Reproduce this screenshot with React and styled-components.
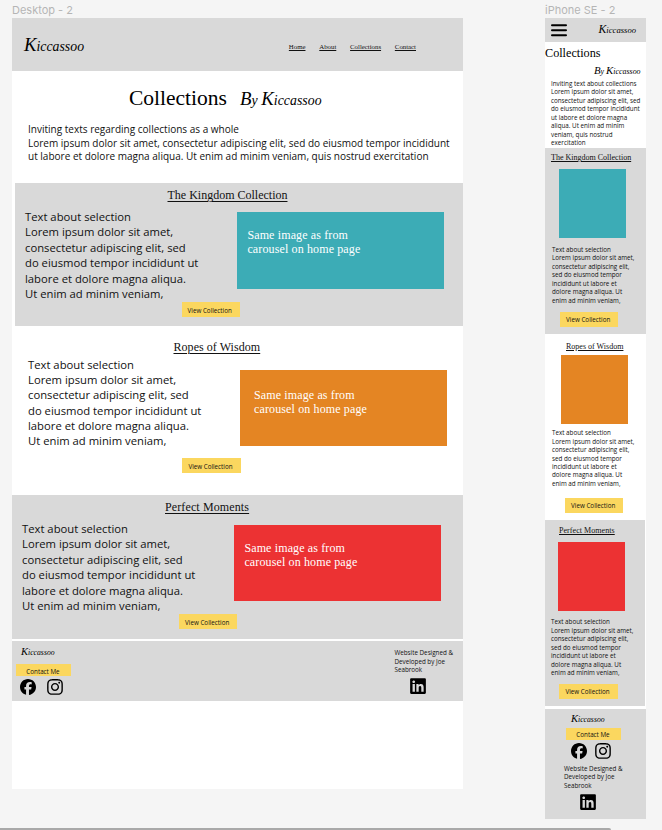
import React from "react";
import styled, { createGlobalStyle } from "styled-components";
import { FaFacebook, FaInstagram, FaLinkedin } from "react-icons/fa6";

const GlobalStyle = createGlobalStyle`
  *, *::before, *::after { box-sizing: border-box; }
  body { margin: 0; background: #f5f5f5; overflow: hidden; }
  p, h1, h2 { margin: 0; font-weight: 400; }
`;

const Canvas = styled.div`
  height: 830px;
  display: flex;
  flex-direction: column;
  background: #f5f5f5;
  color: #111;
  font-family: "Open Sans", sans-serif;
  white-space: nowrap;
`;

const Frames = styled.main`
  height: 828px;
  display: flex;
  align-items: flex-start;
  gap: 82px;
  padding-left: 12px;
`;

const Frame = styled.div`
  width: ${(p) => p.$width}px;
`;

const FrameLabel = styled.div`
  height: 18px;
  padding-top: 2px;
  font: 11px/16px Inter, sans-serif;
  color: #b5b5b5;
`;

const Artboard = styled.div`
  height: ${(p) => p.$height}px;
  display: flex;
  flex-direction: column;
  background: #fff;
`;

const Header = styled.header`
  height: 53px;
  flex: none;
  display: flex;
  justify-content: space-between;
  padding: 15px 47px 0 12px;
  background: #d9d9d9;
`;

const PhoneHeader = styled(Header)`
  height: 24px;
  padding: 5px 10px 0 6px;
`;

const Script = styled.span`
  display: block;
  height: ${(p) => p.$size * 1.25}px;
  font: italic ${(p) => p.$size * 0.69}px/${(p) => p.$size * 1.25}px "Liberation Serif", serif;
  letter-spacing: ${(p) => p.$spacing || 0}px;
  margin: ${(p) => p.$margin || 0};
  color: #000;
`;

const Swash = styled.span`
  font-size: 1.36em;
  line-height: 0;
`;

const Nav = styled.nav`
  display: flex;
  padding-top: 9px;
  gap: 13.8px;
`;

const NavLink = styled.a`
  font: 6.8px/9px "Liberation Serif", serif;
  text-decoration: underline;
  text-underline-offset: 1px;
`;

const Hero = styled.div`
  display: flex;
  height: 51px;
  padding: 13px 0 0 117px;
`;

const HeroTitle = styled.h1`
  width: 111px;
  font: 21.5px/28px "Liberation Serif", serif;
  color: #000;
`;

const PhoneHeroTitle = styled(HeroTitle)`
  width: auto;
  height: 23px;
  font-size: 12.2px;
  line-height: 23px;
`;

const Intro = styled.p`
  height: 61px;
  padding: 0.9px 0 0 16px;
  font-size: 10.03px;
  line-height: 13.8px;
`;

const Small = styled.p`
  font-size: 6.27px;
  line-height: 8.46px;
  margin: ${(p) => p.$margin || 0};
`;

const Section = styled.section`
  flex: none;
  height: ${(p) => p.$height}px;
  margin-left: ${(p) => p.$inset || 0}px;
  margin-right: ${(p) => p.$insetRight || 0}px;
  padding-top: ${(p) => p.$top}px;
  display: flex;
  flex-direction: column;
  align-items: flex-start;
  background: ${(p) => (p.$shaded ? "#d9d9d9" : "#fff")};
`;

const SectionTitle = styled.h2`
  height: 15px;
  margin-left: ${(p) => p.$left}px;
  font: 12px/15px "Liberation Serif", serif;
  letter-spacing: ${(p) => p.$spacing || 0}px;
  text-decoration: underline;
  text-decoration-thickness: 1px;
  text-underline-offset: 1.5px;
`;

const PhoneSectionTitle = styled(SectionTitle)`
  height: 10px;
  font-size: 8.02px;
  line-height: 11px;
  text-underline-offset: 1px;
`;

const Row = styled.div`
  display: flex;
  height: 92px;
  margin-top: ${(p) => p.$top}px;
  padding-left: ${(p) => p.$left}px;
`;

const Blurb = styled.p`
  width: 212px;
  font-size: 11.28px;
  line-height: 15.37px;
`;

const Picture = styled.div`
  width: 207px;
  height: 76.5px;
  margin-top: ${(p) => p.$top}px;
  padding: ${(p) => p.$padTop || 16}px 0 0 ${(p) => p.$pad || 10.4}px;
  background: ${(p) => p.$color};
  color: #fff;
  font: 12px/14px "Liberation Serif", serif;
  letter-spacing: 0.13px;
`;

const PhonePicture = styled.div`
  width: 67.4px;
  height: 69px;
  margin: ${(p) => p.$margin};
  background: ${(p) => p.$color};
`;

const Button = styled.button`
  flex: none;
  display: block;
  width: ${(p) => (p.$wide ? 55 : 58.4)}px;
  height: ${(p) => (p.$wide ? 12 : 15)}px;
  margin: ${(p) => p.$margin || 0};
  padding: ${(p) => (p.$wide ? "2px 1px 0 0" : "1px 2px 0 0")};
  border: 0;
  background: #fbd75f;
  color: #111;
  font: 6.27px/9px "Open Sans", sans-serif;
  text-align: center;
`;

const Footer = styled.footer`
  height: 60px;
  margin-top: 2px;
  display: flex;
  justify-content: space-between;
  padding: 5px 10px 0 4px;
  background: #d9d9d9;
`;

const PhoneFooter = styled(Footer)`
  height: 110px;
  margin-top: 3px;
  flex-direction: column;
  justify-content: flex-start;
  padding: 4px 0 0 19px;
`;

const Icons = styled.div`
  display: flex;
  align-items: center;
  height: 20px;
  gap: ${(p) => p.$gap || 0}px;
  margin: ${(p) => p.$margin};
  color: #000;
  svg { display: block; }
`;

const Track = styled.div`
  height: 2px;
  width: 611px;
  border-radius: 0 2px 0 0;
  background: #a9a9a9;
`;

const sections = [
  { title: "The Kingdom Collection", color: "#3cacb6", shaded: true, inset: 3, height: 143, top: 5, titleLeft: 152.5, rowTop: 6, rowLeft: 10, picTop: 3, btn: "1px 0 0 166.5px" },
  { title: "Ropes of Wisdom", color: "#e48523", height: 169, top: 13.5, titleLeft: 161.5, spacing: 0.05, rowTop: 2, rowLeft: 16, picTop: 13, pad: 14, padTop: 18, btn: "9.5px 0 0 170.3px" },
  { title: "Perfect Moments", color: "#ec3233", shaded: true, height: 144, top: 5, titleLeft: 153, spacing: 0.12, rowTop: 6, rowLeft: 10, picTop: 3.5, btn: "1px 0 0 167px" },
];

const phoneSections = [
  { title: "The Kingdom Collection", color: "#3cacb6", shaded: true, height: 186, top: 4.6, left: 6, pic: "6.4px 0 0 14px", text: "8.4px 0 0 7px", btn: "6.4px 0 0 15px" },
  { title: "Ropes of Wisdom", color: "#e48523", height: 186, top: 7.6, left: 21, pic: "3.4px 0 0 16px", text: "5.6px 0 0 7px", btn: "9.2px 0 0 20px" },
  { title: "Perfect Moments", color: "#ec3233", shaded: true, insetRight: 1, height: 186, top: 5, left: 14, spacing: 0.05, pic: "7px 0 0 13px", text: "7.7px 0 0 6px", btn: "6.4px 0 0 14.4px" },
];

function Logo({ by, ...rest }) {
  return (
    <Script {...rest}>
      {by && <><Swash>B</Swash>y </>}
      <Swash>K</Swash>iccassoo
    </Script>
  );
}

function DesktopSection({ s }) {
  return (
    <Section $shaded={s.shaded} $inset={s.inset} $height={s.height} $top={s.top}>
      <SectionTitle $left={s.titleLeft} $spacing={s.spacing}>{s.title}</SectionTitle>
      <Row $top={s.rowTop} $left={s.rowLeft}>
        <Blurb>
          Text about selection<br />
          Lorem ipsum dolor sit amet,<br />
          consectetur adipiscing elit, sed<br />
          do eiusmod tempor incididunt ut<br />
          labore et dolore magna aliqua.<br />
          Ut enim ad minim veniam,
        </Blurb>
        <Picture $color={s.color} $top={s.picTop} $pad={s.pad} $padTop={s.padTop}>
          Same image as from<br />carousel on home page
        </Picture>
      </Row>
      <Button $margin={s.btn}>View Collection</Button>
    </Section>
  );
}

function PhoneSection({ s }) {
  return (
    <Section $shaded={s.shaded} $insetRight={s.insetRight} $height={s.height} $top={s.top}>
      <PhoneSectionTitle $left={s.left} $spacing={s.spacing}>{s.title}</PhoneSectionTitle>
      <PhonePicture $color={s.color} $margin={s.pic} />
      <Small $margin={s.text}>
        Text about selection<br />
        Lorem ipsum dolor sit amet,<br />
        consectetur adipiscing elit,<br />
        sed do eiusmod tempor<br />
        incididunt ut labore et<br />
        dolore magna aliqua. Ut<br />
        enim ad minim veniam,
      </Small>
      <Button $margin={s.btn}>View Collection</Button>
    </Section>
  );
}

function Credit({ margin }) {
  return (
    <Small $margin={margin}>
      Website Designed &amp;<br />Developed by Joe<br />Seabrook
    </Small>
  );
}

export default function App() {
  return (
    <Canvas>
      <GlobalStyle />
      <Frames>
        <Frame $width={451}>
          <FrameLabel>Desktop - 2</FrameLabel>
          <Artboard $height={771}>
            <Header>
              <Logo $size={20} $margin="1px 0 0" />
              <Nav>
                <NavLink>Home</NavLink>
                <NavLink>About</NavLink>
                <NavLink>Collections</NavLink>
                <NavLink>Contact</NavLink>
              </Nav>
            </Header>
            <Hero>
              <HeroTitle>Collections</HeroTitle>
              <Logo by $size={20} $margin="4px 0 0" $spacing={0.05} />
            </Hero>
            <Intro>
              Inviting texts regarding collections as a whole<br />
              Lorem ipsum dolor sit amet, consectetur adipiscing elit, sed do eiusmod tempor incididunt<br />
              ut labore et dolore magna aliqua. Ut enim ad minim veniam, quis nostrud exercitation
            </Intro>
            {sections.map((s) => <DesktopSection key={s.title} s={s} />)}
            <Footer>
              <div>
                <Logo $size={11.2} $margin="0 0 0 5px" />
                <Button $wide $margin="4px 0 0">Contact Me</Button>
                <Icons $gap={9.5} $margin="0.5px 0 0 4.2px">
                  <FaFacebook size={16} />
                  <FaInstagram size={18} />
                </Icons>
              </div>
              <div>
                <Credit margin="3.4px 0 0" />
                <Icons $margin="1px 0 0 14.5px"><FaLinkedin size={18} /></Icons>
              </div>
            </Footer>
          </Artboard>
        </Frame>

        <Frame $width={101}>
          <FrameLabel>iPhone SE - 2</FrameLabel>
          <Artboard $height={801}>
            <PhoneHeader>
              <svg width="16" height="14" viewBox="0 0 16 14" stroke="#000" strokeWidth="2" strokeLinecap="round">
                <path d="M1 2.2H15M1 7.2H15M1 12.2H15" />
              </svg>
              <Logo $size={12.5} />
            </PhoneHeader>
            <PhoneHeroTitle>Collections</PhoneHeroTitle>
            <Logo by $size={11.5} $margin="0 0 0 49px" />
            <Small $margin="0.6px 0 0 6px">
              Inviting text about collections<br />
              Lorem ipsum dolor sit amet,<br />
              consectetur adipiscing elit, sed<br />
              do eiusmod tempor incididunt<br />
              ut labore et dolore magna<br />
              aliqua. Ut enim ad minim<br />
              veniam, quis nostrud<br />
              exercitation
            </Small>
            {phoneSections.map((s) => <PhoneSection key={s.title} s={s} />)}
            <PhoneFooter>
              <Logo $size={11.2} $margin="0 0 0 7px" />
              <Button $wide $margin="1px 0 0 2px">Contact Me</Button>
              <Icons $gap={7} $margin="1px 0 0 6.5px">
                <FaFacebook size={16} />
                <FaInstagram size={18} />
              </Icons>
              <Credit margin="4px 0 0" />
              <Icons $margin="2px 0 0 14.5px"><FaLinkedin size={18} /></Icons>
            </PhoneFooter>
          </Artboard>
        </Frame>
      </Frames>
      <Track />
    </Canvas>
  );
}
